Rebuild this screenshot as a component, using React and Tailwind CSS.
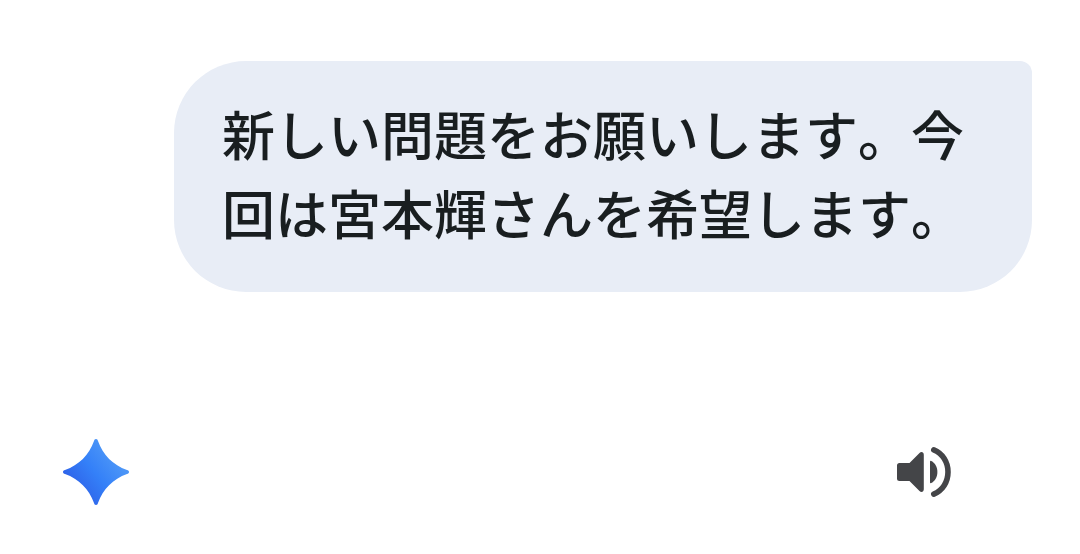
const SparkIcon = () => (
	<svg width="68" height="68" viewBox="0 0 68 68" aria-hidden="true">
		<defs>
			<linearGradient id="spark" x1="14" y1="50" x2="52" y2="20" gradientUnits="userSpaceOnUse">
				<stop offset="0" stopColor="#2f65ea" />
				<stop offset="0.5" stopColor="#3480f8" />
				<stop offset="1" stopColor="#4b95f7" />
			</linearGradient>
		</defs>
		<path
			fill="url(#spark)"
			d="M34 1C35.2 1 35.7 1.8 36 3C41 17 51 27 65 32C66.3 32.3 67 33 67 34C67 35 66.3 35.7 65 36C51 41 41 51 36 65C35.7 66.2 35.2 67 34 67C32.8 67 32.3 66.2 32 65C27 51 17 41 3 36C1.7 35.7 1 35 1 34C1 33 1.7 32.3 3 32C17 27 27 17 32 3C32.3 1.8 32.8 1 34 1Z"
		/>
	</svg>
);

const SpeakerIcon = () => (
	<svg width="56" height="52" viewBox="0 0 56 52" fill="#444548" aria-hidden="true">
		<path d="M3.5 17H13.5L23.5 7C25.3 5.2 27.8 6.2 27.8 8.7V43.3C27.8 45.8 25.3 46.8 23.5 45L13.5 35H3.5Q1 35 1 32.5V19.5Q1 17 3.5 17Z" />
		<path d="M34 15.8Q34 14.5 35.3 15C39.2 17 41.4 21.3 41.4 26C41.4 30.7 39.2 35 35.3 37Q34 37.5 34 36.2Z" />
		<path
			d="M37.8 3.9C46.5 7.5 52 16 52 26C52 36 46.5 44.5 37.8 48.1"
			fill="none"
			stroke="#444548"
			strokeWidth="5.6"
			strokeLinecap="round"
		/>
	</svg>
);

const App = () => {
	return (
		<main
			lang="ja"
			className="h-[554px] w-[1080px] overflow-hidden bg-white pt-[61px] font-['Noto_Sans_CJK_JP',sans-serif]"
		>
			<div className="ml-[174px] h-[231px] w-[858px] rounded-[72px] rounded-tr-[12px] bg-[#e8edf6] pt-[33px] pl-[48px]">
				<p className="text-[53px] leading-[79px] font-medium whitespace-nowrap text-[#191e20] [font-kerning:none] [text-spacing-trim:space-all]">
					新しい問題をお願いします。今
					<br />
					回は宮本輝さんを希望します。
				</p>
			</div>

			<div className="mt-[146px] flex items-center justify-between pr-[128px] pl-[62px]">
				<SparkIcon />
				<button type="button" aria-label="音声で聞く">
					<SpeakerIcon />
				</button>
			</div>
		</main>
	);
};

export default App;
